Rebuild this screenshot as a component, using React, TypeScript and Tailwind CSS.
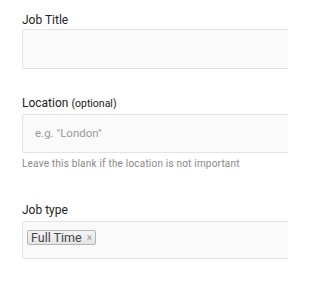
import React from "react";

export default function App() {
  return (
    <div className="w-[288px] h-[288px] overflow-hidden bg-white font-['Roboto',sans-serif]">
      <div className="pl-[22px] pt-[12px] w-[320px]">
        <label className="block text-[12px] leading-[16px] text-[#222]">Job Title</label>
        <div className="mt-[1px] h-[40px] border border-[#e3e3e3] bg-[#fafafa] rounded-[2px]" />

        <label className="block mt-[26px] text-[12px] leading-[16px] text-[#222]">
          Location <span className="text-[10.5px]">(optional)</span>
        </label>
        <div className="mt-[2px] h-[39px] border border-[#e3e3e3] bg-[#fafafa] rounded-[2px] flex items-center pl-[12px]">
          <span className="text-[11.5px] text-[#999]">e.g. "London"</span>
        </div>
        <p className="mt-[4px] text-[10px] leading-[14px] text-[#888] tracking-[0.2px]">
          Leave this blank if the location is not important
        </p>

        <label className="block mt-[31px] text-[12px] leading-[16px] text-[#222]">Job type</label>
        <div className="mt-[3px] h-[38px] border border-[#e3e3e3] bg-[#fafafa] rounded-[2px] pl-[4px] pt-[3px]">
          <span className="inline-flex items-center h-[15px] px-[3px] border border-[#b5b5b5] rounded-[2px] bg-[linear-gradient(#f4f4f4,#e4e4e4)] text-[12.5px] leading-[13px] text-[#444]">
            Full Time
            <span className="ml-[5px] text-[10px] text-[#999]">×</span>
          </span>
        </div>

        <label className="block mt-[28px] text-[12px] leading-[16px] text-[#222]">Job description</label>
      </div>
    </div>
  );
}
